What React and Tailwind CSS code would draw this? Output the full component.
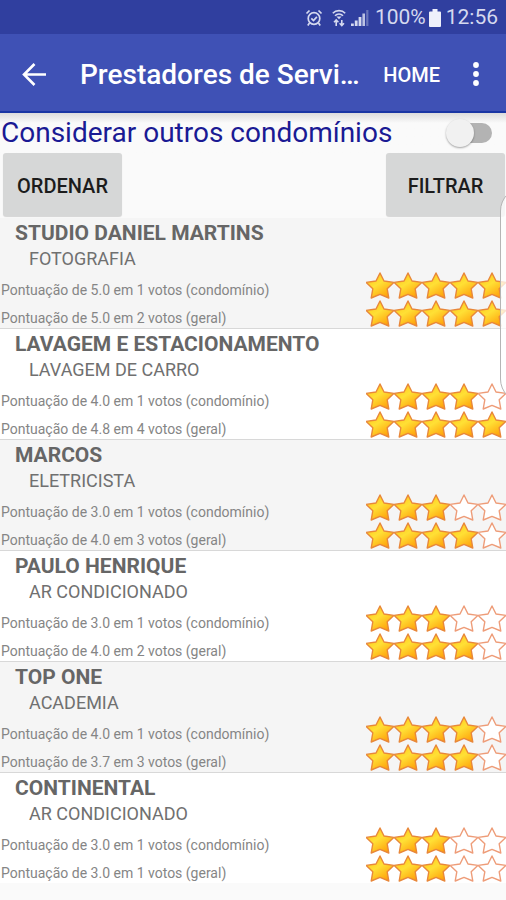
import { useState } from 'react';

const providers = [
  { name: 'STUDIO DANIEL MARTINS', service: 'FOTOGRAFIA', local: { score: '5.0', votes: 1, stars: 5 }, general: { score: '5.0', votes: 2, stars: 5 } },
  { name: 'LAVAGEM E ESTACIONAMENTO', service: 'LAVAGEM DE CARRO', local: { score: '4.0', votes: 1, stars: 4 }, general: { score: '4.8', votes: 4, stars: 5 } },
  { name: 'MARCOS', service: 'ELETRICISTA', local: { score: '3.0', votes: 1, stars: 3 }, general: { score: '4.0', votes: 3, stars: 4 } },
  { name: 'PAULO HENRIQUE', service: 'AR CONDICIONADO', local: { score: '3.0', votes: 1, stars: 3 }, general: { score: '4.0', votes: 2, stars: 4 } },
  { name: 'TOP ONE', service: 'ACADEMIA', local: { score: '4.0', votes: 1, stars: 4 }, general: { score: '3.7', votes: 3, stars: 4 } },
  { name: 'CONTINENTAL', service: 'AR CONDICIONADO', local: { score: '3.0', votes: 1, stars: 3 }, general: { score: '3.0', votes: 1, stars: 3 } },
];

const STAR = 'M14 1 18 9 27.8 10.4 21.2 16.8 22.8 26 14 22.4 5.2 26 6.8 16.8 0.2 10.4 10 9Z';

function Star({ filled }) {
  return (
    <svg viewBox="0 0 28 28" className="size-7 shrink-0">
      <path
        d={STAR}
        fill={filled ? 'url(#gold)' : '#ffffff'}
        stroke={filled ? '#e8873a' : '#ee9c78'}
        strokeWidth="1.4"
        strokeLinejoin="round"
      />
    </svg>
  );
}

function Rating({ score, votes, stars, scope }) {
  return (
    <div className="flex h-7 items-center justify-between">
      <span className="pt-2 pl-px text-[14px] leading-5 text-[#858585]">
        Pontuação de {score} em {votes} votos ({scope})
      </span>
      <div className="flex" role="img" aria-label={`${stars} de 5 estrelas`}>
        {[1, 2, 3, 4, 5].map((n) => (
          <Star key={n} filled={n <= stars} />
        ))}
      </div>
    </div>
  );
}

function StatusBar() {
  return (
    <div className="flex h-[34px] items-center justify-end bg-[#303f9f] pt-[2px] pr-2 text-[21px] text-[#d5d9ef]">
      <svg viewBox="0 0 18 18" className="mr-2 size-[18px]" fill="none" stroke="currentColor" strokeWidth="1.7">
        <circle cx="9" cy="9.5" r="5.8" />
        <path d="m6.3 9.3 2.2 2.2 3.4-3.7M1.5 4.5l3-3M16.5 4.5l-3-3M4.5 14l-1.7 2.5M13.5 14l1.7 2.5" />
      </svg>
      <svg viewBox="0 0 16 18" className="mr-1 h-[18px] w-4" fill="none" stroke="currentColor" strokeWidth="1.6">
        <path d="M1.8 4.2C5 .8 11 .8 14.2 4.2M4 6.8c2.2-2.4 5.8-2.4 8 0" />
        <path d="M8 10.2 5.4 7.4h5.2Z" fill="currentColor" stroke="none" />
        <path d="M5.2 17v-5.5M3 13.2l2.2-2.2 2.2 2.2M10.8 11v5.5M8.6 14.3l2.2 2.2 2.2-2.2" />
      </svg>
      <svg viewBox="0 0 18 18" className="mr-[6px] size-[18px]" fill="currentColor">
        <path d="M0 14.5h2.8V17H0zM3.8 11.5h2.8V17H3.8zM7.6 8h2.8v9H7.6z" />
        <path d="M11.4 4.5h2.6V17h-2.6z" opacity=".85" />
        <path d="M15.2 1h2.2v16h-2.2z" opacity=".35" />
      </svg>
      <span>100%</span>
      <svg viewBox="0 0 14 18" className="mr-1 ml-[2px] h-[18px] w-[14px]" fill="#eef0fb">
        <path d="M4.5 0h5v2.5H12a1 1 0 0 1 1 1V17a1 1 0 0 1-1 1H2a1 1 0 0 1-1-1V3.5a1 1 0 0 1 1-1h2.5z" />
      </svg>
      <span>12:56</span>
    </div>
  );
}

function AppBar() {
  return (
    <header className="flex h-[79px] items-center border-b-2 border-[#1a36a4] bg-[#3f51b5] pt-1 pr-4 pl-5 text-white">
      <button type="button" aria-label="Voltar" className="mr-8">
        <svg viewBox="0 0 28 28" className="size-7" fill="none" stroke="currentColor" strokeWidth="2.6">
          <path d="M26 13.5H5M14.5 3 4 13.5 14.5 24" />
        </svg>
      </button>
      <h1 className="flex-1 text-[28px] leading-9 font-medium whitespace-nowrap">Prestadores de Servi…</h1>
      <button type="button" className="text-[20px] font-medium">HOME</button>
      <button type="button" aria-label="Mais opções" className="ml-[22px]">
        <svg viewBox="0 0 28 28" className="size-7" fill="currentColor">
          <circle cx="14" cy="4" r="2.9" />
          <circle cx="14" cy="13" r="2.9" />
          <circle cx="14" cy="22" r="2.9" />
        </svg>
      </button>
    </header>
  );
}

export default function App() {
  const [others, setOthers] = useState(false);

  return (
    <div className="relative min-h-screen overflow-hidden bg-[#fafafa] font-['Roboto',sans-serif]">
      {/* shared gradient for the rating stars */}
      <svg className="absolute size-0" aria-hidden="true">
        <defs>
          <linearGradient id="gold" x1="0" y1="0" x2="0.7" y2="1">
            <stop offset="0" stopColor="#ffbf14" />
            <stop offset="0.5" stopColor="#ffe035" />
            <stop offset="1" stopColor="#ffa00a" />
          </linearGradient>
        </defs>
      </svg>

      <StatusBar />
      <AppBar />

      <main>
        <label className="flex h-10 items-center justify-between bg-linear-to-b from-[#dcdcdc] to-[#fafafa] to-25% pr-[14px] pl-px text-[28px] text-[#1a1a94]">
          Considerar outros condomínios
          <span className="relative flex h-8 w-[46px] items-center">
            <input
              type="checkbox"
              role="switch"
              checked={others}
              onChange={(e) => setOthers(e.target.checked)}
              className="peer ml-2 h-5 w-[38px] appearance-none rounded-full bg-[#b3b3b3] checked:bg-[#9fa8da]"
            />
            <span className="absolute left-0 size-7 rounded-full bg-[#f1f1f1] shadow-[0_1px_2px_rgba(0,0,0,0.35)] peer-checked:left-5" />
          </span>
        </label>

        <div className="flex justify-between pr-px pb-[2px] pl-[3px]">
          <button type="button" className="h-[63px] w-[119px] rounded-[3px] bg-[#d6d7d7] pt-[2px] text-[20px] font-medium text-[#1c1c1c] shadow-[0_1px_1px_rgba(0,0,0,0.15)]">
            ORDENAR
          </button>
          <button type="button" className="h-[63px] w-[119px] rounded-[3px] bg-[#d6d7d7] pt-[2px] text-[20px] font-medium text-[#1c1c1c] shadow-[0_1px_1px_rgba(0,0,0,0.15)]">
            FILTRAR
          </button>
        </div>

        <ul>
          {providers.map((p) => (
            <li key={p.name} className="border-b border-[#d8d8d8] bg-white last:border-b-0 odd:bg-[#f5f5f5]">
              <h2 className="pt-[2px] pl-[15px] text-[21px] leading-[26px] font-bold text-[#666666]">{p.name}</h2>
              <p className="pl-[29px] text-[18px] leading-[26px] text-[#707070]">{p.service}</p>
              <Rating {...p.local} scope="condomínio" />
              <Rating {...p.general} scope="geral" />
            </li>
          ))}
        </ul>
      </main>

      {/* edge panel handle */}
      <div className="absolute top-[187px] -right-6 h-[216px] w-[30px] rounded-l-[24px] border border-[#b5b5b5] bg-white/75" />
    </div>
  );
}
